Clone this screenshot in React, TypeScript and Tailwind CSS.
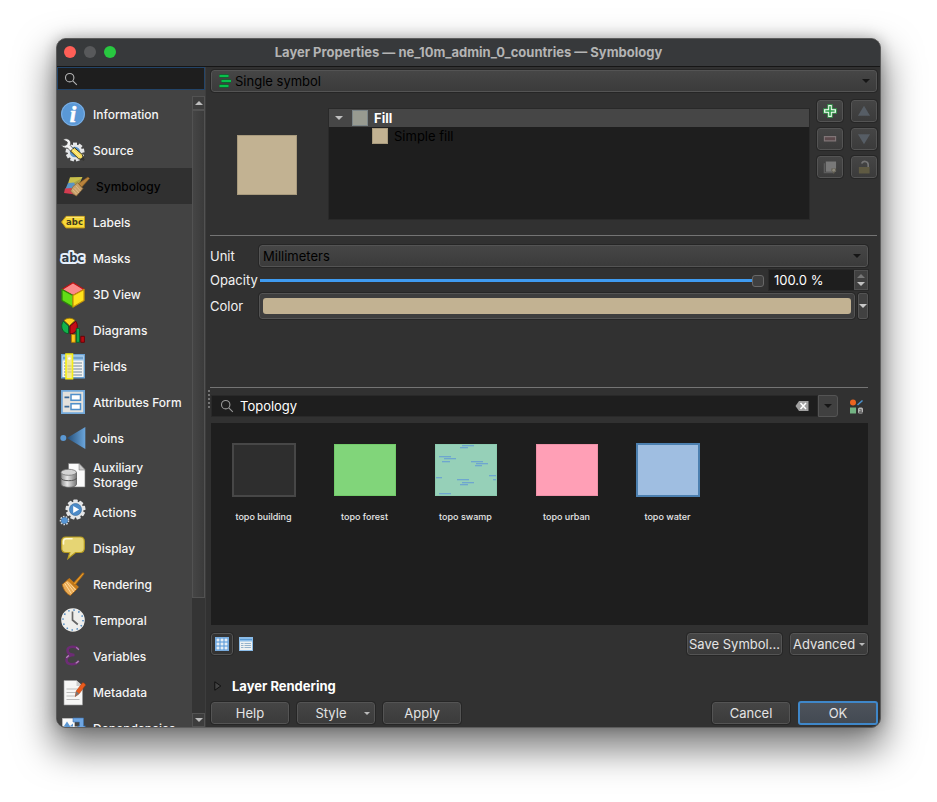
import React, { useState } from "react";

const btn =
  "flex h-[22px] items-center justify-center rounded-[3px] border border-[#545454] bg-linear-to-b from-[#454545] to-[#3b3b3b] text-[13px] leading-4 text-[#e4e4e4] outline outline-[#262626]";

function Caret({ up = false, className = "" }: { up?: boolean; className?: string }) {
  return (
    <svg viewBox="0 0 8 4" className={`h-1 w-2 shrink-0 ${className}`} fill="currentColor" aria-hidden="true">
      <path d={up ? "M0 4 4 0l4 4z" : "M0 0h8L4 4z"} />
    </svg>
  );
}

function SearchIcon({ className = "" }: { className?: string }) {
  return (
    <svg viewBox="0 0 14 14" className={`h-3.5 w-3.5 shrink-0 ${className}`} fill="none" stroke="currentColor" strokeWidth="1.1" aria-hidden="true">
      <circle cx="5.7" cy="5.7" r="4.2" />
      <path d="m8.8 8.8 4 4" />
    </svg>
  );
}

const gearTeeth = [0, 40, 80, 120, 160, 200, 240, 280, 320];

const icons: Record<string, React.ReactNode> = {
  Information: (
    <>
      <circle cx="12" cy="12" r="12" fill="#5a98d6" />
      <circle cx="12" cy="12" r="11.4" fill="none" stroke="#7fb0e2" strokeWidth="1" />
      <text x="12" y="20" textAnchor="middle" fontFamily="Liberation Serif" fontStyle="italic" fontWeight="700" fontSize="23" fill="#fff" stroke="#fff" strokeWidth=".6">i</text>
    </>
  ),
  Source: (
    <>
      <g transform="translate(14 14)">
        {gearTeeth.map((a) => (
          <rect key={a} x="-2" y="-9.4" width="4" height="5" fill="#e4e6e8" transform={`rotate(${a})`} />
        ))}
        <circle r="7.4" fill="#e4e6e8" />
        <circle r="5.2" fill="#5b97cf" />
      </g>
      <path d="M2 1.6c3-1.800 7-.6 7.600 2.600.3 1.300 0 2.300-.4 3.200l4 4.200-2.700 2.600-4-4.300c-2.500.8-5-.3-6.200-2.800l3 .7 2.600-1.300.4-2.500z" fill="#f4f4f4" stroke="#4d4d4d" strokeWidth=".8" />
      <path d="m9.500 13 3.800-3.400 8 6.900 1.700 5.500-5.500-1.300z" fill="#f6dc5d" stroke="#2e2e22" strokeWidth="1" />
      <path d="m11.500 11.500 8 7.300" stroke="#fff3a8" strokeWidth="1" />
      <path d="m19 21.200 3.300-2.800.8 4z" fill="#333" />
    </>
  ),
  Symbology: (
    <>
      <path d="M6 3.200 18.500 3l-3.500 7-11-.5z" fill="#c9c04b" />
      <path d="m4 9 6.500-.5 3 6L7 16l-5.500-1z" fill="#5b94c4" />
      <path d="M1 14.500 7.500 14l3.700 6.500L0 19z" fill="#d43c50" />
      <path d="m10 8.500 7.500-4-2.500 6-3 2z" fill="#a9a24a" />
      <path d="m9 12.500 4.700-3.700 5.200 5.800-6.500 7.400c-2-1-4.400-3-5.800-5z" fill="#c7a06b" stroke="#8d6a3a" strokeWidth=".7" />
      <path d="m10.500 14 4.500 5M8.500 15.500l4 4.500M12 12l4.500 5" stroke="#e1c292" strokeWidth=".8" />
      <path d="m14.500 9.500 3.300 3.600L25.500 4.500 24 3z" fill="#b8823c" stroke="#86591c" strokeWidth=".6" />
    </>
  ),
  Labels: (
    <>
      <path d="M.6 12 5 6.400h18.500v11.500H5z" fill="#f7d939" stroke="#c99c13" strokeWidth="1" />
      <path d="M5.300 7.200h17.600" stroke="#fff0a0" strokeWidth=".8" />
      <text x="13.500" y="15" textAnchor="middle" fontFamily="DejaVu Sans" fontWeight="700" fontSize="8.500" fill="#3f3a1d">abc</text>
    </>
  ),
  Masks: (
    <text x="12" y="15.500" textAnchor="middle" fontFamily="DejaVu Sans" fontWeight="700" fontSize="11.500" fill="#2f3a45" stroke="#e6effb" strokeWidth="4" strokeLinejoin="round" paintOrder="stroke">abc</text>
  ),
  "3D View": (
    <g strokeLinejoin="round" strokeWidth="1.300">
      <path d="M12 .8 23 7.500 12 13.500 1 7.500z" fill="#fb8a8a" stroke="#c01313" />
      <path d="M1 7.500 12 13.500V25L1 18.500z" fill="#62dd16" stroke="#2d8b0b" />
      <path d="M23 7.500 12 13.500V25l11-6.500z" fill="#ffe31c" stroke="#c7960a" />
    </g>
  ),
  Diagrams: (
    <g strokeWidth=".9">
      <path d="M8.500 7.500 3 2.500C6-.5 11-.5 14 2.500z" fill="#ffd11f" stroke="#9a7b00" />
      <path d="M7.500 8 2.400 3.200C-.3 6.500.3 12 4 14.600c1 .7 2.300 1 3.500 1z" fill="#12b24b" stroke="#065c25" />
      <path d="m9 8 5.800-4.700c2.600 3.700 1.800 9.400-2 11.600-1.200.7-2.500 1-3.800.9z" fill="#c50d17" stroke="#690006" />
      <path d="M10.500 16.500h3.800v7.800h-3.800z" fill="#ffc61e" stroke="#b37800" />
      <path d="M15.300 10.500h3.200v13.800h-3.200z" fill="#15a94b" stroke="#056126" />
      <path d="M19.800 18.300h3.600v6h-3.600z" fill="#b80a12" stroke="#640004" />
    </g>
  ),
  Fields: (
    <>
      <path d="M.7.7h22.600v23H.7z" fill="#f3f3f0" stroke="#6ba1d1" strokeWidth="1.400" />
      <path d="M1.500 1.500h21v5h-21z" fill="#96c2e8" />
      <path d="M2 4h20" stroke="#4d83b5" strokeWidth="1" />
      <path d="M3 9h18M3 12h18M3 15h18M3 18h18M3 21h18" stroke="#72879a" strokeWidth="1.200" />
      <path d="M5 0h6.500v24.700H5z" fill="#f1e99b" stroke="#f5ed16" strokeWidth="1.600" />
      <path d="M6.500 12h4M6.500 15h4M6.500 18h4" stroke="#c1bb83" />
      <circle cx="8.300" cy="4.500" r="1.300" fill="#fff" />
    </>
  ),
  "Attributes Form": (
    <>
      <path d="M.9.9h22.200v22.200H.9z" fill="#e3e1dc" stroke="#73a9da" strokeWidth="1.800" />
      <path d="M10 4.600h9.500v5.600H10zM10 13.800h9.500v5.600H10z" fill="#fff" stroke="#4f8fca" strokeWidth="1.500" />
      <path d="M3.500 7.400h4.800M3.500 16.600h4.800" stroke="#3d6a96" strokeWidth="1.800" />
    </>
  ),
  Joins: (
    <>
      <defs>
        <linearGradient id="join">
          <stop offset="0" stopColor="#234d77" />
          <stop offset="1" stopColor="#6ba6dc" />
        </linearGradient>
      </defs>
      <circle cx="2.300" cy="12" r="3" fill="#5b98d2" />
      <path d="M6 12 24.300 1v22z" fill="url(#join)" />
    </>
  ),
  "Auxiliary Storage": (
    <>
      <defs>
        <linearGradient id="cyl">
          <stop offset="0" stopColor="#8d8d8d" />
          <stop offset=".4" stopColor="#e7e7e7" />
          <stop offset="1" stopColor="#777" />
        </linearGradient>
      </defs>
      <path d="M7.500.5H18l6 6V24H7.500z" fill="#fafafa" stroke="#777" strokeWidth=".6" />
      <path d="M18 .5V7h6z" fill="#ccc" stroke="#777" strokeWidth=".5" />
      <path d="M0 9.500v11.600c0 4.300 15.500 4.300 15.500 0V9.500z" fill="url(#cyl)" stroke="#5b5b5b" strokeWidth=".8" />
      <ellipse cx="7.700" cy="9.300" rx="7.700" ry="3" fill="#d4d4d4" stroke="#747474" strokeWidth=".8" />
      <path d="M0 15c0 3.600 15.500 3.600 15.500 0" fill="none" stroke="#565656" />
    </>
  ),
  Actions: (
    <>
      <g transform="translate(14.500 9.500)">
        {gearTeeth.map((a) => (
          <rect key={a} x="-2.200" y="-10" width="4.400" height="5" rx=".8" fill="#e5e6e7" transform={`rotate(${a})`} />
        ))}
        <circle r="8" fill="#e5e6e7" />
        <circle r="6" fill="#4d8bc8" stroke="#3a6d9f" strokeWidth=".7" />
        <path d="m-2.300-3.400 6 3.400-6 3.400z" fill="#fff" />
      </g>
      <g transform="translate(3.500 20.500)">
        <circle r="4" fill="none" stroke="#d4dce4" strokeWidth="1.600" strokeDasharray="1.600 1.200" />
        <circle r="3.300" fill="#5695d4" />
      </g>
    </>
  ),
  Display: (
    <>
      <path d="M5 1h14c3 0 4.300 1.400 4.300 4.200v7c0 3-1.500 4.300-4.300 4.300h-4.500L7 22.500l1.800-6H5c-3 0-4.300-1.500-4.300-4.300v-7C.7 2.400 2 1 5 1z" fill="#e6d574" stroke="#b89d20" strokeWidth="1.200" />
      <path d="M2.500 8V5.500C2.500 3.500 3.300 2.700 5.300 2.700H11" fill="none" stroke="#fff8cf" strokeWidth="1.600" strokeLinecap="round" />
    </>
  ),
  Rendering: (
    <>
      <path d="m6.500 8 9.500 9-6.500 6.500C6 22.500 2.500 18 1.200 12.500z" fill="#e9aa55" stroke="#a86511" strokeWidth=".8" />
      <path d="m5.500 10 7.500 10M3.800 11.500l6.500 10M7.500 9.500l7 8.500" stroke="#ffda9d" strokeWidth="1" />
      <path d="m6 8.300 2.300-2.200 9.600 8.900-2.200 2.300z" fill="#c67b1a" />
      <path d="M12.200 11.500 21.500 1c.6-.7 1.900.4 1.300 1.200l-9 11z" fill="#e69a28" stroke="#a96715" strokeWidth=".9" />
    </>
  ),
  Temporal: (
    <>
      <circle cx="12" cy="12" r="11.800" fill="#eeeeec" />
      <circle cx="12" cy="12" r="10" fill="none" stroke="#4b88c2" strokeWidth="1.500" strokeDasharray="1.500 3.736" />
      <path d="M11.500 3.500V12l5.300 4.500" fill="none" stroke="#666" strokeWidth="1.700" />
    </>
  ),
  Variables: (
    <>
      <path d="M17.500 5.500C15.500 1.800 6.500 1.500 6.500 6.600c0 3 3 4.300 7 4.400-5 .1-8 1.700-8 5 0 5.600 9.500 5.300 12.300.7" fill="none" stroke="#6d2c75" strokeWidth="2.600" />
      <path d="M15 3.500c1.500.4 2.300 1.300 2.700 2.500M5.500 14c.4-1.200 1.300-2 2.500-2.400M14.700 19.200c1.300-.5 2.200-1.300 2.900-2.300" fill="none" stroke="#b48aba" strokeWidth="1.200" />
    </>
  ),
  Metadata: (
    <>
      <path d="M3 .5h12.500l6 5.500v19H3z" fill="#f6f6f5" stroke="#999" strokeWidth=".6" />
      <path d="M15.500.5V6h6z" fill="#ccc" />
      <path d="M5.500 9h11M5.500 12.500h12M5.500 16h9M5.500 19.500h13" stroke="#bbb" strokeWidth="1.200" />
      <path d="m14.300 16.500 1-5.500 6-8c1-.8 3.600 1.200 3 2.300l-6 8.300z" fill="#e95b1d" stroke="#b33c08" strokeWidth=".6" />
      <path d="m14.300 16.500.9-5.300 3 2.600z" fill="#777" />
    </>
  ),
  Dependencies: (
    <>
      <path d="M1.500 2.500h12v10h-12z" fill="#fafafa" stroke="#bbb" />
      <path d="M3 10 6 5.500l3 4.500 3-2.500V12H3z" fill="#5c97d3" />
      <path d="M12 2h10.500v8h2l-4 4.500-4-4.500h2V6H12z" fill="#6fa6e2" stroke="#3c74b2" strokeWidth=".6" />
      <path d="M9 10.500h7.500V22H9z" fill="#e8e8e8" />
    </>
  ),
};

const pages = Object.keys(icons);

function Sidebar() {
  const [active, setActive] = useState("Symbology");
  return (
    <aside className="flex w-[148px] shrink-0 flex-col bg-[#434343]">
      <label className="flex h-[23px] shrink-0 items-center border border-[#234468] bg-[#1e1e1e] pl-1.5">
        <SearchIcon className="text-[#b5b5b5]" />
        <input aria-label="Search pages" className="ml-1 w-full min-w-0 bg-transparent text-[13px] text-white outline-none" />
      </label>
      <div className="flex h-0 grow pt-1.5">
        <nav className="min-w-0 grow overflow-hidden">
          {pages.map((name) => (
            <button
              key={name}
              type="button"
              onClick={() => setActive(name)}
              className={`flex w-full items-center gap-2 text-left text-[12px] leading-[15px] font-medium ${
                name === "Auxiliary Storage" ? "h-[38px]" : "h-9"
              } ${name === active ? "bg-[#303030] pl-[7px] text-black" : "pl-1 text-[#f5f5f5]"}`}
            >
              <svg viewBox="0 0 24 24" className="h-6 w-6 shrink-0 overflow-visible" aria-hidden="true">
                {icons[name]}
              </svg>
              <span className={name === "Auxiliary Storage" ? "w-16" : "whitespace-nowrap"}>{name}</span>
            </button>
          ))}
        </nav>
        <div className="flex w-[13px] shrink-0 flex-col bg-[#343434]">
          <button type="button" aria-label="Scroll up" className="flex h-3.5 shrink-0 items-center justify-center border border-[#525252] bg-[#3d3d3d] text-[#bdbdbd]">
            <Caret up />
          </button>
          <div className="grow-[488] border border-[#525252] bg-linear-to-r from-[#454545] to-[#3b3b3b]" />
          <div className="grow-[116]" />
          <button type="button" aria-label="Scroll down" className="flex h-3.5 shrink-0 items-center justify-center border border-[#525252] bg-[#3d3d3d] text-[#bdbdbd]">
            <Caret />
          </button>
        </div>
      </div>
    </aside>
  );
}

const toolIcons: [string, React.ReactNode][] = [
  ["Add symbol layer", (
    <>
      <path d="M5 .5h5V5h4.500v5H10v4.500H5V10H.5V5H5z" fill="#e6f5e9" stroke="#2c8a41" strokeWidth="1" />
      <path d="M7.500 2.500v10M2.500 7.500h10" stroke="#2e9a48" strokeWidth="1.800" />
    </>
  )],
  ["Move up", <path d="M7.500 2 14 12.500H1z" fill="#565d65" />],
  ["Remove symbol layer", <path d="M1.500 5h12v4.500h-12z" fill="#5d4a4d" stroke="#807577" strokeWidth="1.200" />],
  ["Move down", <path d="M1 2.500h13L7.500 13z" fill="#565d65" />],
  ["Duplicate symbol layer", (
    <>
      <path d="M1.500 3.500v10h10" fill="none" stroke="#5c5c5c" strokeWidth="1.500" />
      <path d="M3 1.500h11v11H3z" fill="#787878" />
      <path d="M9 9h5v2l-2.500 4L9 11z" fill="#635f51" />
      <circle cx="11.500" cy="11" r="1.500" fill="#8a877c" />
    </>
  )],
  ["Lock colour", (
    <>
      <path d="M5 3.800c1-3.300 7-3 7 1.200v3" fill="none" stroke="#757575" strokeWidth="1.800" />
      <path d="M2 7.500h11.500v7H2z" fill="#5f5a42" />
    </>
  )],
];

const swamp = [
  [3, 11, 12], [8, 13, 12], [6, 16, 8], [26, 0, 12], [24, 2, 8], [35, 16, 12], [40, 18, 12], [39, 20, 7],
  [0, 32, 6], [21, 34, 12], [26, 37, 12], [24, 39, 8], [53, 30, 9], [57, 34, 5], [3, 48, 12], [8, 50, 12],
];

const symbols: [string, string][] = [
  ["topo building", "h-[54px] w-16 border-2 border-[#474747] bg-[#2e2e2e]"],
  ["topo forest", "my-px h-[52px] w-[62px] border border-[#73cb6a] bg-[#81d57a]"],
  ["topo swamp", "my-px h-[52px] w-[62px] border border-[#8ccbaf] bg-[#96d0b8]"],
  ["topo urban", "my-px h-[52px] w-[62px] border border-[#ee91a8] bg-[#ff9fb6]"],
  ["topo water", "h-[54px] w-16 border-2 border-[#4c80b0] bg-[#9fbee1]"],
];

function SymbolList() {
  return (
    <ul className="mt-1.5 ml-px flex min-h-[202px] grow flex-wrap content-start bg-[#1e1e1e] pl-0.5 pt-5">
      {symbols.map(([name, look]) => (
        <li key={name} className="w-[101px]">
          <button type="button" className="flex w-full flex-col items-center">
            <span className={`block overflow-hidden ${look}`}>
              {name === "topo swamp" && (
                <svg viewBox="0 0 60 50" className="h-[50px] w-[60px]" aria-hidden="true">
                  {swamp.map(([x, y, w]) => (
                    <rect key={`${x}-${y}`} x={x} y={y} width={w} height="1.300" fill="#6ea6cf" />
                  ))}
                </svg>
              )}
            </span>
            <span className="mt-3.5 text-[9px] leading-3 font-medium text-[#e6e6e6]">{name}</span>
          </button>
        </li>
      ))}
    </ul>
  );
}

function LayerTree() {
  return (
    <div className="flex pt-2">
      <div className="flex w-[119px] shrink-0 pt-[35px] pl-[27px]">
        <div className="h-[60px] w-[60px] border border-[#a89a7d] bg-[#c2b292]" />
      </div>
      <div role="tree" className="mt-[9px] h-[110px] grow bg-[#1e1e1e] text-[13px] leading-[18px] outline outline-[#292929]">
        <div role="treeitem" className="flex h-[18px] items-center bg-[#464646] pl-1.5 font-bold text-white">
          <Caret className="text-[#c0c0c0]" />
          <span className="mr-1.5 ml-[9px] h-4 w-4 border border-[#7b8588] bg-[#989b91]" />
          Fill
        </div>
        <div role="treeitem" className="flex h-[18px] items-center pl-[43px] text-black">
          <span className="mr-1.5 h-4 w-4 border border-[#a89a7d] bg-[#c2b292]" />
          Simple fill
        </div>
      </div>
      <div className="ml-2 grid shrink-0 grid-cols-2 content-start gap-x-2 gap-y-1.5">
        {toolIcons.map(([name, art]) => (
          <button key={name} type="button" aria-label={name} className={`${btn} w-[26px]`}>
            <svg viewBox="0 0 15 15" className="h-3.5 w-3.5" aria-hidden="true">{art}</svg>
          </button>
        ))}
      </div>
    </div>
  );
}

const selectBox =
  "flex h-[22px] items-center rounded-[3px] border border-[#545454] bg-linear-to-b from-[#464646] to-[#3b3b3b] text-[#161616] outline outline-[#262626]";
const field = "h-full w-full min-w-0 appearance-none bg-transparent text-[13px] text-black outline-none";

export default function App() {
  return (
    <div className="flex min-h-screen bg-white px-14 pt-[38px] pb-[74px] font-['Inter','Liberation_Sans',sans-serif] text-[13px] leading-4">
      <div className="flex min-w-0 grow flex-col overflow-hidden rounded-[10px] border border-[#5c5c5c] bg-[#313131] shadow-[0_18px_36px_4px_rgba(0,0,0,0.5),0_0_14px_rgba(0,0,0,0.25)]">
        <header className="flex h-7 shrink-0 items-center border-b border-[#161616] bg-[#37393b] px-[7px] pb-0.5">
          <div className="flex w-[60px] gap-2">
            <button type="button" aria-label="Close" className="h-3 w-3 rounded-full bg-[#ff5f57]" />
            <button type="button" aria-label="Minimize" className="h-3 w-3 rounded-full bg-[#58595b]" />
            <button type="button" aria-label="Zoom" className="h-3 w-3 rounded-full bg-[#28c840]" />
          </div>
          <h1 className="grow pr-[60px] text-center text-[13px] font-bold text-[#b4b4b4]">
            Layer Properties — ne_10m_admin_0_countries — Symbology
          </h1>
        </header>
        <div className="flex grow">
          <Sidebar />
          <main className="flex min-w-0 grow flex-col border-l border-[#3d3d3d] pt-[3px] pr-[3px] pb-[3px] pl-1">
            <label className={`${selectBox} ml-px pr-1.5 pl-1.5`}>
              <svg viewBox="0 0 14 14" className="mr-[3px] h-3.5 w-3.5 shrink-0" fill="none" stroke="#08c04b" strokeWidth="2" aria-hidden="true">
                <path d="M1.500 2h9M3.500 7h9.500M1.500 12h9" stroke="#086b2c" strokeWidth="3.400" />
                <path d="M1.500 2h9M3.500 7h9.500M1.500 12h9" />
              </svg>
              <select aria-label="Renderer" className={field}>
                <option>Single symbol</option>
              </select>
              <Caret />
            </label>
            <LayerTree />
            <hr className="mt-4 border-[#747474]" />
            <div className="mr-[9px] flex grow flex-col">
              <div className="mt-[9px] grid grid-cols-[49px_1fr] items-center text-[#f2f2f2]">
                <label htmlFor="unit">Unit</label>
                <div className={`${selectBox} pr-1.5 pl-[3px]`}>
                  <select id="unit" className={field}>
                    <option>Millimeters</option>
                  </select>
                  <Caret />
                </div>
                <label htmlFor="opacity">Opacity</label>
                <div className="flex h-[26px] items-center">
                  <input
                    id="opacity"
                    type="range"
                    defaultValue={100}
                    className="ml-px h-3 min-w-0 grow appearance-none bg-transparent [&::-webkit-slider-runnable-track]:h-[3px] [&::-webkit-slider-runnable-track]:bg-[#3f9bf0] [&::-webkit-slider-thumb]:-mt-1 [&::-webkit-slider-thumb]:h-3 [&::-webkit-slider-thumb]:w-3 [&::-webkit-slider-thumb]:appearance-none [&::-webkit-slider-thumb]:rounded-[3px] [&::-webkit-slider-thumb]:border [&::-webkit-slider-thumb]:border-[#686868] [&::-webkit-slider-thumb]:bg-[#404040]"
                  />
                  <div className="ml-[5px] flex h-5 w-[99px] bg-[#1e1e1e] outline outline-[#292929]">
                    <input aria-label="Opacity value" defaultValue="100.0 %" className="min-w-0 grow bg-transparent pl-[5px] text-[13px] text-white outline-none" />
                    <div className="flex w-3.5 shrink-0 flex-col items-center justify-evenly border border-[#505050] bg-[#404040]">
                      <button type="button" aria-label="Increase opacity" className="text-[#777]"><Caret up /></button>
                      <button type="button" aria-label="Decrease opacity" className="text-[#c0c0c0]"><Caret /></button>
                    </div>
                  </div>
                </div>
                <span>Color</span>
                <div className="flex h-[26px] gap-[3px]">
                  <button type="button" aria-label="Color" className="grow rounded-[3px] border border-[#545454] bg-[#3e3e3e] p-[3px] outline outline-[#262626]">
                    <span className="block h-4 rounded-[3px] bg-[#c2b292]" />
                  </button>
                  <button type="button" aria-label="Color options" className="flex w-2.5 items-center justify-center rounded-[2px] border border-[#545454] bg-[#414141] text-[#c9c9c9] outline outline-[#262626]">
                    <Caret />
                  </button>
                </div>
              </div>
              <hr className="mt-[68px] border-[#747474]" />
              <div className="relative mt-[7px] ml-px flex h-[22px] items-center">
                <div aria-hidden="true" className="absolute -top-[5px] -left-[3px] h-[18px] border-l-2 border-dotted border-[#747474]" />
                <div className="flex h-full grow items-center border border-[#292929] bg-[#1e1e1e] pl-2">
                  <SearchIcon className="text-[#9a9a9a]" />
                  <input aria-label="Filter symbols" defaultValue="Topology" className="ml-1.5 min-w-0 grow bg-transparent text-[13px] text-white outline-none" />
                  <button type="button" aria-label="Clear" className="mr-2">
                    <svg viewBox="0 0 14 12" className="h-3 w-3.5" aria-hidden="true">
                      <path d="M4 1h9.500v10H4L.5 6z" fill="#a0a0a0" />
                      <path d="m5.500 3 5.500 6M11 3 5.500 9" stroke="#fff" strokeWidth="1.500" />
                    </svg>
                  </button>
                </div>
                <button type="button" aria-label="Symbol groups" className="flex h-full w-5 items-center justify-center rounded-r-[3px] border border-[#545454] bg-[#404040] text-[#161616]">
                  <Caret />
                </button>
                <button type="button" aria-label="Style manager" className="mr-1 ml-[11px]">
                  <svg viewBox="0 0 15 15" className="h-[15px] w-[15px]" aria-hidden="true">
                    <circle cx="4" cy="3.500" r="3" fill="#ec6420" />
                    <path d="m8.500 6 5-4.500" stroke="#4c93cf" strokeWidth="1.500" />
                    <path d="M1 8.500h6v6H1z" fill="#73b383" />
                    <rect x="9" y="8.500" width="5" height="6" rx="1.500" fill="#b5b5b5" />
                    <path d="M10.300 10.500h2v2.500h-1.500v-1h1.500M10 13.500h4" stroke="#555" strokeWidth=".7" fill="none" />
                  </svg>
                </button>
              </div>
              <SymbolList />
              <div className="mt-2 ml-px flex h-[22px] shrink-0 items-center">
                <button type="button" aria-label="Icon view" className="flex h-[22px] w-[22px] items-center justify-center rounded-[3px] border border-[#555] bg-[#333] pb-px outline outline-[#282828]">
                  <svg viewBox="0 0 14 14" className="h-3.5 w-3.5" aria-hidden="true">
                    <path d="M0 0h14v14H0z" fill="#77ace0" />
                    <path d="M2 2h2v2H2zm4 0h2v2H6zm4 0h2v2h-2zM2 6h2v2H2zm4 0h2v2H6zm4 0h2v2h-2zM2 10h2v2H2zm4 0h2v2H6zm4 0h2v2h-2z" fill="#f1f5f8" stroke="#dbe8f4" strokeWidth=".7" />
                  </svg>
                </button>
                <button type="button" aria-label="List view" className="ml-1.5 pb-px">
                  <svg viewBox="0 0 14 14" className="h-3.5 w-3.5" aria-hidden="true">
                    <path d="M0 0h14v14H0z" fill="#8bbce8" />
                    <path d="M1 4.500h12V13H1z" fill="#eef1f2" />
                    <path d="M1 2.500h12" stroke="#5a9bd5" />
                    <path d="M2 6.500h2.500m1 0H12M2 8.500h2.500m1 0H12M2 10.500h2.500m1 0H12" stroke="#95b3cc" />
                  </svg>
                </button>
                <button type="button" className={`${btn} ml-auto w-[95px] whitespace-nowrap`}>Save Symbol…</button>
                <button type="button" className={`${btn} ml-2 w-[78px] gap-1 whitespace-nowrap`}>
                  Advanced
                  <svg viewBox="0 0 6 3" className="h-[3px] w-1.5" fill="#bbb" aria-hidden="true"><path d="M0 0h6L3 3z" /></svg>
                </button>
              </div>
              <button type="button" className="mt-[23px] flex h-4 items-center gap-2.5 pl-1 font-bold text-white">
                <svg viewBox="0 0 8 10" className="h-2.5 w-2" fill="#444" stroke="#111" aria-hidden="true"><path d="m.8.8 6 4.200-6 4.200z" /></svg>
                Layer Rendering
              </button>
            </div>
            <footer className="-mr-px mt-2 ml-px flex h-[22px] items-center gap-2">
              <button type="button" className={`${btn} w-[78px]`}>Help</button>
              <button type="button" className={`${btn} w-[78px]`}>
                <span className="grow">Style</span>
                <svg viewBox="0 0 6 3" className="mr-1 h-[3px] w-1.5" fill="#bbb" aria-hidden="true"><path d="M0 0h6L3 3z" /></svg>
              </button>
              <button type="button" className={`${btn} w-[78px]`}>Apply</button>
              <button type="button" className={`${btn} ml-auto w-[78px]`}>Cancel</button>
              <button type="button" className="h-6 w-20 rounded-[3px] border-2 border-[#3f87c9] bg-linear-to-b from-[#4d535b] to-[#434a53] text-[13px] text-[#e4e4e4]">OK</button>
            </footer>
          </main>
        </div>
      </div>
    </div>
  );
}
